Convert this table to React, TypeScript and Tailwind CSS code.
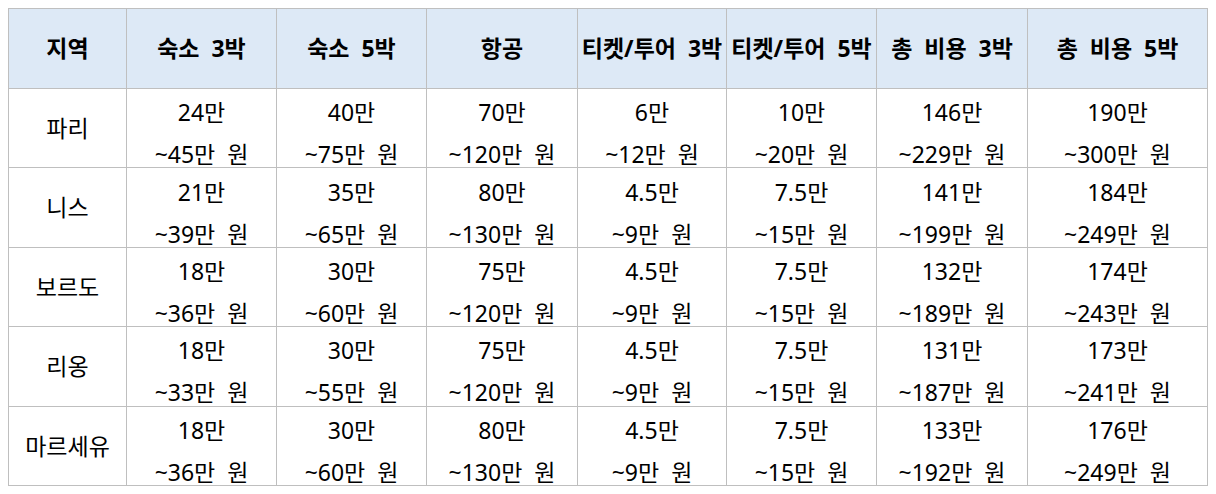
const headers = ["지역", "숙소  3박", "숙소  5박", "항공", "티켓/투어  3박", "티켓/투어  5박", "총  비용  3박", "총  비용  5박"];

const rows = [
  ["파리", ["24만", "~45만 원"], ["40만", "~75만 원"], ["70만", "~120만 원"], ["6만", "~12만 원"], ["10만", "~20만 원"], ["146만", "~229만 원"], ["190만", "~300만 원"]],
  ["니스", ["21만", "~39만 원"], ["35만", "~65만 원"], ["80만", "~130만 원"], ["4.5만", "~9만 원"], ["7.5만", "~15만 원"], ["141만", "~199만 원"], ["184만", "~249만 원"]],
  ["보르도", ["18만", "~36만 원"], ["30만", "~60만 원"], ["75만", "~120만 원"], ["4.5만", "~9만 원"], ["7.5만", "~15만 원"], ["132만", "~189만 원"], ["174만", "~243만 원"]],
  ["리옹", ["18만", "~33만 원"], ["30만", "~55만 원"], ["75만", "~120만 원"], ["4.5만", "~9만 원"], ["7.5만", "~15만 원"], ["131만", "~187만 원"], ["173만", "~241만 원"]],
  ["마르세유", ["18만", "~36만 원"], ["30만", "~60만 원"], ["80만", "~130만 원"], ["4.5만", "~9만 원"], ["7.5만", "~15만 원"], ["133만", "~192만 원"], ["176만", "~249만 원"]],
] as const;

const widths = ["w-[118px]", "w-[150px]", "w-[150px]", "w-[151px]", "w-[149px]", "w-[150px]", "w-[151px]", "w-[180px]"];

export default function App() {
  return (
    <div className="bg-white w-[1216px] h-[494px] p-2 font-['Noto_Sans','Noto_Sans_CJK_KR',sans-serif] text-black">
      <table className="border-collapse table-fixed w-[1200px]">
        <colgroup>
          {widths.map((w, i) => (
            <col key={i} className={w} />
          ))}
        </colgroup>
        <thead>
          <tr className="h-[80px] bg-[#dde9f6]">
            {headers.map((h) => (
              <th key={h} className="border border-[#bfbfbf] p-0 text-center text-[23px] font-bold whitespace-pre text-nowrap overflow-visible">
                {h}
              </th>
            ))}
          </tr>
        </thead>
        <tbody>
          {rows.map(([region, ...cells]) => (
            <tr key={region} className="h-[79.4px]">
              <td className="border border-[#bfbfbf] p-0 text-center text-[23px]">{region}</td>
              {cells.map((c, i) => (
                <td key={i} className="border border-[#bfbfbf] p-0 text-center text-[23px] leading-[42px]">
                  <div className="mt-[2px] -mb-[8px]">
                    <div>{c[0]}</div>
                    <div className="whitespace-pre">{c[1].replace(" ", "  ")}</div>
                  </div>
                </td>
              ))}
            </tr>
          ))}
        </tbody>
      </table>
    </div>
  );
}
